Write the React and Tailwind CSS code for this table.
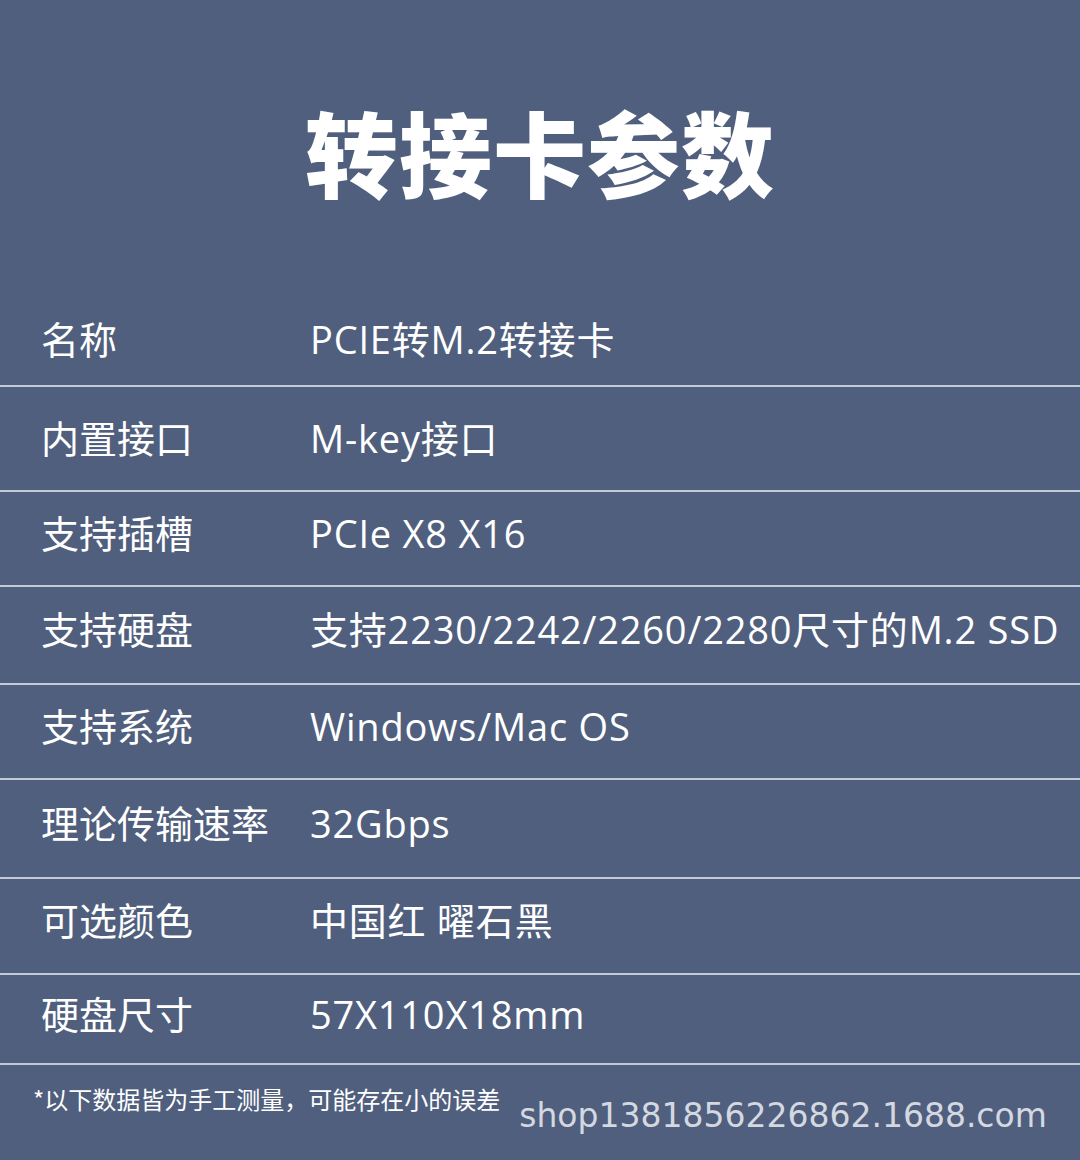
import React from 'react';

const rows = [
  { label: '名称', value: 'PCIE转M.2转接卡', h: 'h-[96px] pt-[2px]' },
  { label: '内置接口', value: 'M-key接口', h: 'h-[105px] pb-[2px]' },
  { label: '支持插槽', value: 'PCIe X8 X16', h: 'h-[95px] pb-[12px]' },
  { label: '支持硬盘', value: '支持2230/2242/2260/2280尺寸的M.2 SSD', h: 'h-[98px] pb-[12px]' },
  { label: '支持系统', value: 'Windows/Mac OS', h: 'h-[95px] pb-[12px]' },
  { label: '理论传输速率', value: '32Gbps', h: 'h-[99px] pb-[12px]' },
  { label: '可选颜色', value: '中国红 曜石黑', h: 'h-[96px] pb-[12px]' },
  { label: '硬盘尺寸', value: '57X110X18mm', h: 'h-[90px] pb-[10px]' },
];

const font = "font-['Open_Sans','Noto_Sans_CJK_SC',sans-serif]";

export default function App() {
  return (
    <div className={`w-[1080px] h-[1160px] bg-[#505f7e] text-white overflow-hidden ${font}`}>
      <div className="h-[291px] flex items-center justify-center pt-[10px]">
        <h1 className="text-[93px] font-black leading-none tracking-[1px] font-['Noto_Sans_CJK_SC',sans-serif]">
          转接卡参数
        </h1>
      </div>

      {rows.map((row) => (
        <div
          key={row.label}
          className={`${row.h} flex items-center border-b-2 border-[#c3cad6]`}
        >
          <span className="w-[310px] pl-[41px] text-[38px] leading-none shrink-0">
            {row.label}
          </span>
          <span className="text-[38px] leading-none tracking-[0.8px] whitespace-nowrap">
            {row.value}
          </span>
        </div>
      ))}

      <div className="flex items-start pt-[22px]">
        <span className="pl-[33px] text-[24px] leading-none font-['Noto_Sans_CJK_SC',sans-serif]">
          *以下数据皆为手工测量，可能存在小的误差
        </span>
        <span className="ml-[19px] mt-[12px] text-[33px] leading-none text-[#d4d8e0] font-['DejaVu_Sans',sans-serif]">
          shop1381856226862.1688.com
        </span>
      </div>
    </div>
  );
}
